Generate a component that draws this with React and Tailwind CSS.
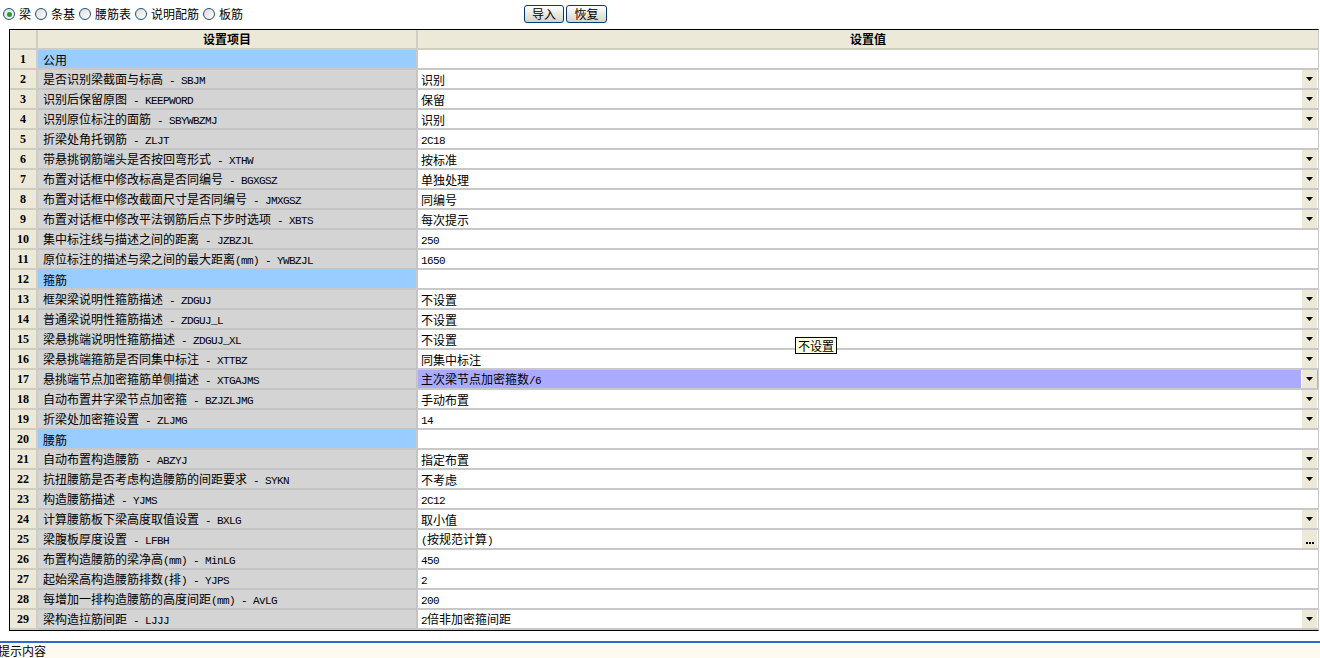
import React from "react";

const rows = [
  { n: 1, g: "公用" },
  { n: 2, k: "是否识别梁截面与标高 - SBJM", v: "识别", d: 1 },
  { n: 3, k: "识别后保留原图 - KEEPWORD", v: "保留", d: 1 },
  { n: 4, k: "识别原位标注的面筋 - SBYWBZMJ", v: "识别", d: 1 },
  { n: 5, k: "折梁处角托钢筋 - ZLJT", v: "2C18" },
  { n: 6, k: "带悬挑钢筋端头是否按回弯形式 - XTHW", v: "按标准", d: 1 },
  { n: 7, k: "布置对话框中修改标高是否同编号 - BGXGSZ", v: "单独处理", d: 1 },
  { n: 8, k: "布置对话框中修改截面尺寸是否同编号 - JMXGSZ", v: "同编号", d: 1 },
  { n: 9, k: "布置对话框中修改平法钢筋后点下步时选项 - XBTS", v: "每次提示", d: 1 },
  { n: 10, k: "集中标注线与描述之间的距离 - JZBZJL", v: "250" },
  { n: 11, k: "原位标注的描述与梁之间的最大距离(mm) - YWBZJL", v: "1650" },
  { n: 12, g: "箍筋" },
  { n: 13, k: "框架梁说明性箍筋描述 - ZDGUJ", v: "不设置", d: 1 },
  { n: 14, k: "普通梁说明性箍筋描述 - ZDGUJ_L", v: "不设置", d: 1 },
  { n: 15, k: "梁悬挑端说明性箍筋描述 - ZDGUJ_XL", v: "不设置", d: 1 },
  { n: 16, k: "梁悬挑端箍筋是否同集中标注 - XTTBZ", v: "同集中标注", d: 1 },
  { n: 17, k: "悬挑端节点加密箍筋单侧描述 - XTGAJMS", v: "主次梁节点加密箍数/6", d: 1, h: 1 },
  { n: 18, k: "自动布置井字梁节点加密箍 - BZJZLJMG", v: "手动布置", d: 1 },
  { n: 19, k: "折梁处加密箍设置 - ZLJMG", v: "14", d: 1 },
  { n: 20, g: "腰筋" },
  { n: 21, k: "自动布置构造腰筋 - ABZYJ", v: "指定布置", d: 1 },
  { n: 22, k: "抗扭腰筋是否考虑构造腰筋的间距要求 - SYKN", v: "不考虑", d: 1 },
  { n: 23, k: "构造腰筋描述 - YJMS", v: "2C12" },
  { n: 24, k: "计算腰筋板下梁高度取值设置 - BXLG", v: "取小值", d: 1 },
  { n: 25, k: "梁腹板厚度设置 - LFBH", v: "(按规范计算)", e: 1 },
  { n: 26, k: "布置构造腰筋的梁净高(mm) - MinLG", v: "450" },
  { n: 27, k: "起始梁高构造腰筋排数(排) - YJPS", v: "2" },
  { n: 28, k: "每增加一排构造腰筋的高度间距(mm) - AvLG", v: "200" },
  { n: 29, k: "梁构造拉筋间距 - LJJJ", v: "2倍非加密箍间距", d: 1 },
];

function T({ s }) {
  const parts = s.match(/[\x20-\x7e]+|[^\x20-\x7e]+/g) || [];
  return (
    <span className="leading-[14px] whitespace-pre">
      {parts.map((p, i) =>
        /^[\x20-\x7e]+$/.test(p) ? (
          <span
            key={i}
            className="font-['Liberation_Mono',monospace] text-[11px] tracking-[-0.6px]"
          >
            {p}
          </span>
        ) : (
          <span key={i} className="font-['Noto_Sans_CJK_SC',sans-serif] text-[12px]">
            {p}
          </span>
        )
      )}
    </span>
  );
}

function Radio({ checked, label }) {
  return (
    <div className="flex items-center gap-[4px] mr-[4px]">
      <div className="w-[12px] h-[12px] rounded-full border border-[#1c5180] bg-gradient-to-br from-[#dcdcd6] to-white flex items-center justify-center">
        {checked && <div className="w-[5px] h-[5px] rounded-full bg-[#21a121]" />}
      </div>
      <span className="font-['Noto_Sans_CJK_SC',sans-serif] text-[12px] leading-none text-black">{label}</span>
    </div>
  );
}

function Btn({ children }) {
  return (
    <div className="h-[18px] flex items-center justify-center rounded-[3px] border border-[#003c74] bg-gradient-to-b from-white to-[#d6d3c6] font-['Noto_Sans_CJK_SC',sans-serif] text-[12px] leading-none text-black">
      {children}
    </div>
  );
}

export default function App() {
  return (
    <div className="relative w-[1320px] h-[658px] bg-white overflow-hidden text-black font-['Noto_Sans_CJK_SC',sans-serif]">
      <div className="h-[29px] flex items-center pl-[3px] pb-[1px]">
        <Radio checked label="梁" />
        <Radio label="条基" />
        <Radio label="腰筋表" />
        <Radio label="说明配筋" />
        <Radio label="板筋" />
        <div className="ml-[277px] flex gap-[2px]">
          <div className="w-[40px]"><Btn>导入</Btn></div>
          <div className="w-[41px]"><Btn>恢复</Btn></div>
        </div>
      </div>
      <div className="ml-[9px] w-[1310px] border border-black border-r-[#c8c8c8]">
        <div className="grid grid-cols-[28px_380px_900px] h-[20px]">
          <div className="bg-[#ece9d8] border-r-2 border-b-2 border-[#cfcdc0]" />
          <div className="bg-[#ece9d8] border-r-2 border-b-2 border-[#cfcdc0] flex items-center justify-center text-[12px] font-bold">设置项目</div>
          <div className="bg-[#ece9d8] border-b-2 border-[#cfcdc0] flex items-center justify-center text-[12px] font-bold">设置值</div>
        </div>
        {rows.map((r) => (
          <div key={r.n} className="grid grid-cols-[28px_380px_900px] h-[20px]">
            <div className="bg-[#ece9d8] border-r-2 border-b-2 border-[#cfcdc0] flex items-center justify-center font-['Liberation_Serif',serif] font-bold text-[12px]">
              {r.n}
            </div>
            {r.g ? (
              <>
                <div className="bg-[#99ccff] border-r-2 border-b-2 border-[#c8c8c8] flex items-center pl-[5px]">
                  <T s={r.g} />
                </div>
                <div className="bg-white border-b-2 border-[#c8c8c8]" />
              </>
            ) : (
              <>
                <div className="bg-[#d4d4d4] border-r-2 border-b-2 border-[#c4c4c4] flex items-center pl-[5px] whitespace-nowrap">
                  <T s={r.k} />
                </div>
                <div className={`${r.h ? "bg-[#aaaaff]" : "bg-white"} border-b-2 border-[#c8c8c8] flex items-center`}>
                  <div className="pl-[3px] flex-1 flex items-center whitespace-nowrap"><T s={r.v} /></div>
                  {r.d ? (
                    <div className="w-[16px] h-[18px] mr-[1px] bg-[#ece9d8] border-l border-white flex items-center justify-center">
                      <svg width="7" height="4" viewBox="0 0 7 4"><path d="M0 0h7L3.5 4z" fill="#000" /></svg>
                    </div>
                  ) : null}
                  {r.e ? (
                    <div className="w-[16px] h-[18px] mr-[1px] bg-[#ece9d8] border-l border-white flex items-end justify-center pb-[4px]">
                      <div className="flex gap-[1px]">
                        <div className="w-[2px] h-[2px] bg-black" />
                        <div className="w-[2px] h-[2px] bg-black" />
                        <div className="w-[2px] h-[2px] bg-black" />
                      </div>
                    </div>
                  ) : null}
                </div>
              </>
            )}
          </div>
        ))}
      </div>
      <div className="mt-[10px] border-t-2 border-[#316ac5] bg-[#fffaf0] h-[17px] flex items-center -ml-[2px] text-[12px] leading-none">
        提示内容
      </div>
      <div className="absolute left-[795px] top-[337px] w-[42px] h-[17px] border border-black bg-[#ffffe1] flex items-center justify-center text-[12px] leading-none">
        不设置
      </div>
    </div>
  );
}
